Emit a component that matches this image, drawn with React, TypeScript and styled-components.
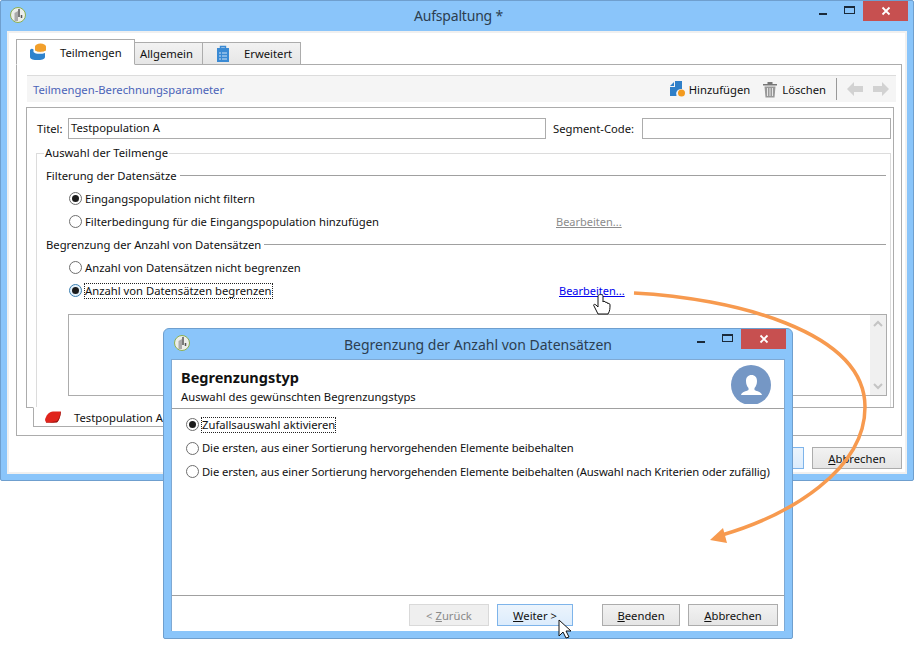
import styled, { createGlobalStyle } from 'styled-components';

const GlobalStyle = createGlobalStyle`
  html, body { margin: 0; padding: 0; background: #fff; }
  body { font-family: "Noto Sans", "Open Sans", sans-serif; font-size: 11.25px; color: #111; }
`;

const Desktop = styled.div`
  position: relative;
  width: 915px;
  height: 653px;
  overflow: hidden;
  background: #fff;
`;

const Window = styled.div<{ $left: number; $top: number; $width: number; $height: number; $side: number; $rounded?: boolean }>`
  position: absolute;
  left: ${(p) => p.$left}px;
  top: ${(p) => p.$top}px;
  width: ${(p) => p.$width}px;
  height: ${(p) => p.$height}px;
  box-sizing: border-box;
  display: flex;
  flex-direction: column;
  background: #8ac5fa;
  border: 1px solid #6f9fce;
  border-radius: ${(p) => (p.$rounded ? '6px 6px 2px 2px' : '2px')};
  padding: 0 ${(p) => p.$side}px ${(p) => p.$side}px;
`;

const TitleBar = styled.div`
  height: 30px;
  flex: none;
  box-sizing: border-box;
  position: relative;
  display: flex;
  align-items: center;
  justify-content: center;
  font-size: 14px;
  color: #2c3e50;
`;

const MainTitleBar = styled(TitleBar)`
  padding: 0 0 2px 3px;
  letter-spacing: -0.2px;
`;

const AppIcon = styled.svg`
  position: absolute;
  left: 2px;
  top: 5px;
`;

const WinControls = styled.div`
  position: absolute;
  right: -1px;
  top: 0;
  display: flex;
  align-items: flex-start;
`;

const WinGlyph = styled.div`
  width: 27px;
  height: 20px;
  display: flex;
  align-items: center;
  justify-content: center;
`;

const CloseBox = styled.div`
  width: 45px;
  height: 20px;
  background: #c75050;
  display: flex;
  align-items: center;
  justify-content: center;
`;

const Client = styled.div`
  flex: 1;
  min-height: 0;
  box-sizing: border-box;
  background: #fff;
  border: 1px solid #7fa9d3;
  border-bottom-width: 0;
  display: flex;
  flex-direction: column;
  position: relative;
`;

const MainClient = styled(Client)`
  padding: 6px 3px 0 7px;
  border: 2px solid #f0f0f0;
`;

const TabStrip = styled.div`
  display: flex;
  align-items: flex-end;
  height: 26px;
  flex: none;
  position: relative;
  z-index: 1;
  margin-bottom: -1px;
`;

const Tab = styled.div<{ $active?: boolean; $width: number; $pad: number }>`
  box-sizing: border-box;
  width: ${(p) => p.$width}px;
  height: ${(p) => (p.$active ? 26 : 23)}px;
  background: ${(p) => (p.$active ? '#fff' : 'linear-gradient(#f2f2f2, #e6e6e6)')};
  border: 1px solid #acacac;
  border-left-width: ${(p) => (p.$active ? 1 : 0)}px;
  border-bottom-color: ${(p) => (p.$active ? '#fff' : '#acacac')};
  display: flex;
  align-items: center;
  gap: 14px;
  padding-left: ${(p) => p.$pad}px;
  white-space: nowrap;
`;

const TabPanel = styled.div`
  height: 372px;
  flex: none;
  box-sizing: border-box;
  border: 1px solid #acacac;
  padding: 10px 5px 0 10px;
  display: flex;
  flex-direction: column;
`;

const Toolbar = styled.div`
  height: 27px;
  flex: none;
  box-sizing: border-box;
  background: #f5f5f5;
  border-top: 1px solid #dcdcdc;
  display: flex;
  align-items: center;
  padding: 0 7px 0 6px;
  margin-bottom: 5px;
`;

const ToolbarTitle = styled.div`
  flex: 1;
  color: #4a63b8;
`;

const ToolButton = styled.div<{ $gap: number; $left: number }>`
  display: flex;
  align-items: center;
  gap: ${(p) => p.$gap}px;
  margin-left: ${(p) => p.$left}px;
`;

const ToolDivider = styled.div`
  width: 1px;
  height: 22px;
  background: #999;
  margin: 0 10px;
`;

const NavArrow = styled.svg<{ $left?: number }>`
  margin-left: ${(p) => p.$left ?? 0}px;
`;

const EditorBox = styled.div`
  position: relative;
  height: 301px;
  width: 868px;
  flex: none;
  box-sizing: border-box;
  margin-left: -1px;
  border: 1px solid #acacac;
  padding: 10px 2px 0 10px;
`;

const FieldRow = styled.div`
  display: flex;
  align-items: center;
  height: 21px;
`;

const FieldLabel = styled.label<{ $width: number; $left?: number }>`
  flex: none;
  width: ${(p) => p.$width}px;
  margin-left: ${(p) => p.$left ?? 0}px;
  white-space: nowrap;
`;

const TextInput = styled.div<{ $width: number }>`
  flex: none;
  box-sizing: border-box;
  width: ${(p) => p.$width}px;
  height: 21px;
  border: 1px solid #acacac;
  background: #fff;
  padding-left: 2px;
  line-height: 18px;
`;

const GroupBox = styled.div`
  position: relative;
  box-sizing: border-box;
  margin: 14px 0 0 -1px;
  height: 254px;
  border: 1px solid #dcdcdc;
  border-bottom: 0;
  padding: 10px 4px 0 9px;
`;

const GroupLegend = styled.div`
  position: absolute;
  left: 7px;
  top: -9px;
  background: #fff;
  padding: 0 1px;
  line-height: 16px;
`;

const SectionHeader = styled.div`
  display: flex;
  align-items: center;
  height: 23px;
  gap: 3px;
  &::after {
    content: '';
    flex: 1;
    height: 1px;
    background: #a0a0a0;
  }
`;

const OptionRow = styled.div`
  display: flex;
  align-items: center;
  height: 23px;
  padding-left: 23px;
  position: relative;
  white-space: nowrap;
`;

const RadioDot = styled.span<{ $on?: boolean; $focus?: boolean }>`
  flex: none;
  box-sizing: border-box;
  width: 13px;
  height: 13px;
  border-radius: 50%;
  border: 1px solid ${(p) => (p.$focus ? '#3c7fb1' : '#6e6e6e')};
  background: ${(p) => (p.$focus ? '#e3f1fb' : '#fff')};
  margin-right: 3px;
  display: flex;
  align-items: center;
  justify-content: center;
  &::after {
    content: '';
    width: 7px;
    height: 7px;
    border-radius: 50%;
    background: ${(p) => (p.$on ? '#1c1c1c' : 'transparent')};
  }
`;

const OptionText = styled.span<{ $focus?: boolean; $tight?: boolean }>`
  outline: ${(p) => (p.$focus ? '1px dotted #222' : 'none')};
  line-height: 14px;
  letter-spacing: ${(p) => (p.$tight ? '-0.1px' : 'normal')};
`;

const EditLink = styled.a<{ $off?: boolean; $left: number }>`
  position: absolute;
  left: ${(p) => p.$left}px;
  color: ${(p) => (p.$off ? '#8c8c8c' : '#0000ee')};
  text-decoration: underline;
  font-size: 11px;
`;

const Preview = styled.div`
  box-sizing: border-box;
  margin: 12px 0 0 22px;
  width: 819px;
  height: 82px;
  border: 1px solid #acacac;
  display: flex;
  justify-content: flex-end;
`;

const ScrollTrack = styled.div`
  width: 16px;
  background: #f0f0f0;
  display: flex;
  flex-direction: column;
  justify-content: space-between;
  align-items: center;
  padding: 5px 0;
`;

const BottomTab = styled.div`
  box-sizing: border-box;
  width: 500px;
  height: 20px;
  flex: none;
  margin: -1px 0 0 6px;
  background: #fff;
  border: 1px solid #acacac;
  border-top-color: #fff;
  position: relative;
  display: flex;
  align-items: center;
  gap: 13px;
  padding-left: 11px;
`;

const FooterRow = styled.div`
  display: flex;
  justify-content: flex-end;
  padding-top: 11px;
`;

const Button = styled.div<{ $width: number; $state?: 'off' | 'hot'; $left?: number }>`
  box-sizing: border-box;
  flex: none;
  width: ${(p) => p.$width}px;
  height: 22px;
  margin-left: ${(p) => p.$left ?? 0}px;
  display: flex;
  align-items: center;
  justify-content: center;
  border: 1px solid ${(p) => (p.$state === 'off' ? '#d9d9d9' : p.$state === 'hot' ? '#7eb4ea' : '#acacac')};
  color: ${(p) => (p.$state === 'off' ? '#8a8a8a' : '#111')};
  background: ${(p) =>
    p.$state === 'off'
      ? '#efefef'
      : p.$state === 'hot'
        ? 'linear-gradient(#ecf4fc, #dcecfc)'
        : 'linear-gradient(#f2f2f2, #e5e5e5)'};
`;

const DialogHeader = styled.div`
  height: 49px;
  flex: none;
  box-sizing: border-box;
  border-bottom: 1px solid #a0a0a0;
  padding: 8px 0 0 9px;
  position: relative;
  overflow: hidden;
`;

const DialogTitle = styled.div`
  font-weight: 700;
  font-size: 14.5px;
  line-height: 19px;
  color: #111;
`;

const DialogSubtitle = styled.div`
  margin-top: 2px;
  line-height: 16px;
`;

const Avatar = styled.svg`
  position: absolute;
  right: 13px;
  top: 5px;
`;

const DialogOptions = styled.div`
  flex: 1;
  padding-top: 4px;
`;

const DialogOption = styled(OptionRow)`
  height: 23.5px;
  padding-left: 14px;
`;

const DialogFooter = styled.div`
  height: 36px;
  flex: none;
  box-sizing: border-box;
  border-top: 1px solid #a0a0a0;
  display: flex;
  align-items: flex-start;
  padding: 8px 6px 0 237px;
`;

const Overlay = styled.svg`
  position: absolute;
  left: 0;
  top: 0;
  pointer-events: none;
`;

const Logo = () => (
  <AppIcon width="18" height="18" viewBox="0 0 18 18">
    <circle cx="9" cy="9" r="7.5" fill="#eceeea" stroke="#8db04f" />
    <path d="M5.5 7 L9 5 V15 H5.5 z" fill="#aaa" />
    <path d="M10 3 V11 M12.5 9 V12" stroke="#555" strokeWidth="1.5" fill="none" />
  </AppIcon>
);

const Controls = () => (
  <WinControls>
    <WinGlyph>
      <svg width="10" height="10" viewBox="0 0 10 10"><rect x="1" y="7" width="8" height="2" fill="#1a2a3a" /></svg>
    </WinGlyph>
    <WinGlyph>
      <svg width="11" height="10" viewBox="0 0 11 10"><rect x=".5" y=".5" width="10" height="7" fill="none" stroke="#1a2a3a" /><rect x="0" y="0" width="11" height="2" fill="#1a2a3a" /></svg>
    </WinGlyph>
    <CloseBox>
      <svg width="10" height="10" viewBox="0 0 10 10"><path d="M1.5 1.5 L8.5 8.5 M8.5 1.5 L1.5 8.5" stroke="#fff" strokeWidth="1.8" /></svg>
    </CloseBox>
  </WinControls>
);

export default function App() {
  return (
    <Desktop>
      <GlobalStyle />
      <Window $left={0} $top={0} $width={914} $height={481} $side={6}>
        <MainTitleBar>
          <Logo />
          Aufspaltung *
          <Controls />
        </MainTitleBar>
        <MainClient>
          <TabStrip>
            <Tab $active $width={119} $pad={13}>
              <svg width="16" height="18" viewBox="0 0 16 18">
                <ellipse cx="10.5" cy="3.5" rx="5.5" ry="3" fill="#f2a02c" />
                <rect x="5" y="3.5" width="11" height="3.5" fill="#f2a02c" />
                <ellipse cx="10.5" cy="7" rx="5.5" ry="2.6" fill="#f2a02c" />
                <path d="M5 8.2 C7 9.8 13 9.8 16 8.2" stroke="#fff" fill="none" />
                <path d="M0 7 C1 5.5 2.5 5.5 3.5 6.5 V9 C5 11 11 11.5 15 10 V14 C15 16.5 11 17 7.5 17 C4 17 0 16.5 0 14 z" fill="#2f83cd" />
              </svg>
              Teilmengen
            </Tab>
            <Tab $width={68} $pad={5}>Allgemein</Tab>
            <Tab $width={98} $pad={13}>
              <svg width="14" height="17" viewBox="0 0 14 17">
                <rect x="1" y="3" width="12" height="14" fill="#3a8ad4" />
                <path d="M4.5 3.5 V1.5 H9.5 V3.5 z" fill="none" stroke="#3a8ad4" strokeWidth="1.4" />
                <path d="M3 8h2M6 8h5M3 11h2M6 11h5M3 14h2M6 14h5" stroke="#cfe3f6" />
              </svg>
              Erweitert
            </Tab>
          </TabStrip>
          <TabPanel>
            <Toolbar>
              <ToolbarTitle>Teilmengen-Berechnungsparameter</ToolbarTitle>
              <ToolButton $gap={3} $left={12}>
                <svg width="16" height="17" viewBox="0 0 16 17">
                  <path d="M0 5 L4 1 V5 z M5 0 H12 V8 A5 5 0 0 0 6.5 15 H0 V6 H5 z" fill="#2f7fc8" />
                  <circle cx="11.5" cy="12" r="3.5" fill="#f39a1e" />
                </svg>
                Hinzufügen
              </ToolButton>
              <ToolButton $gap={5} $left={13}>
                <svg width="14" height="17" viewBox="0 0 14 17">
                  <path d="M0 3 H14 V4.5 H0 z M4.5 1 H9.5 V3 H4.5 z" fill="#777" />
                  <path d="M1.5 5.5 H12.5 L11.5 16.5 H2.5 z" fill="#999" />
                  <path d="M4.5 7 V15 M7 7 V15 M9.5 7 V15" stroke="#e6e6e6" />
                </svg>
                Löschen
              </ToolButton>
              <ToolDivider />
              <NavArrow width="16" height="14" viewBox="0 0 16 14"><path d="M0 7 L7 0 V4 H16 V10 H7 V14 z" fill="#d2d2d2" /></NavArrow>
              <NavArrow $left={10} width="16" height="14" viewBox="0 0 16 14"><path d="M16 7 L9 0 V4 H0 V10 H9 V14 z" fill="#d2d2d2" /></NavArrow>
            </Toolbar>
            <EditorBox>
              <FieldRow>
                <FieldLabel $width={31}>Titel:</FieldLabel>
                <TextInput $width={478}>Testpopulation A</TextInput>
                <FieldLabel $width={89} $left={7}>Segment-Code:</FieldLabel>
                <TextInput $width={249} />
              </FieldRow>
              <GroupBox>
                <GroupLegend>Auswahl der Teilmenge</GroupLegend>
                <SectionHeader>Filterung der Datensätze</SectionHeader>
                <OptionRow>
                  <RadioDot $on />
                  <OptionText>Eingangspopulation nicht filtern</OptionText>
                </OptionRow>
                <OptionRow>
                  <RadioDot />
                  <OptionText>Filterbedingung für die Eingangspopulation hinzufügen</OptionText>
                  <EditLink $off $left={510}>Bearbeiten...</EditLink>
                </OptionRow>
                <SectionHeader>Begrenzung der Anzahl von Datensätzen</SectionHeader>
                <OptionRow>
                  <RadioDot />
                  <OptionText>Anzahl von Datensätzen nicht begrenzen</OptionText>
                </OptionRow>
                <OptionRow>
                  <RadioDot $on $focus />
                  <OptionText $focus>Anzahl von Datensätzen begrenzen</OptionText>
                  <EditLink $left={513}>Bearbeiten...</EditLink>
                </OptionRow>
                <Preview>
                  <ScrollTrack>
                    <svg width="10" height="8" viewBox="0 0 10 8"><path d="M1 6 L5 2 L9 6" fill="none" stroke="#c4c4c4" strokeWidth="2" /></svg>
                    <svg width="10" height="8" viewBox="0 0 10 8"><path d="M1 2 L5 6 L9 2" fill="none" stroke="#c4c4c4" strokeWidth="2" /></svg>
                  </ScrollTrack>
                </Preview>
              </GroupBox>
            </EditorBox>
            <BottomTab>
              <svg width="16" height="12" viewBox="0 0 16 12">
                <path d="M0 9 C1 4 4 1 8 .5 H16 C15.5 5 14 10 12 11 C8 12 3 12 1 11.5 z" fill="#e0241c" />
                <path d="M1 11 C5 11.5 9 11 12 10 C14 8 15 5 15.5 1 L16 1 C15.5 5 14 10 12 11.5 H1 z" fill="#8e1410" />
              </svg>
              Testpopulation A
            </BottomTab>
          </TabPanel>
          <FooterRow>
            <Button $width={80} $state="hot" />
            <Button $width={90} $left={8}>
              <span><u>A</u>bbrechen</span>
            </Button>
          </FooterRow>
        </MainClient>
      </Window>

      <Window $left={163} $top={328} $width={630} $height={311} $side={7} $rounded>
        <TitleBar>
          <Logo />
          Begrenzung der Anzahl von Datensätzen
          <Controls />
        </TitleBar>
        <Client>
          <DialogHeader>
            <DialogTitle>Begrenzungstyp</DialogTitle>
            <DialogSubtitle>Auswahl des gewünschten Begrenzungstyps</DialogSubtitle>
            <Avatar width="40" height="39" viewBox="0 0 40 39">
              <circle cx="20" cy="20" r="20" fill="#7597c5" />
              <path d="M20.5 10 C24 10 26 12.5 26 16 C26 19 25 21.5 23.5 23 V25 C26 26.5 30 26.5 31 30 H10 C11 26.5 15 26.5 17.5 25 V23 C16 21.5 15 19 15 16 C15 12.5 17 10 20.5 10 z" fill="#fff" />
            </Avatar>
          </DialogHeader>
          <DialogOptions>
            <DialogOption>
              <RadioDot $on />
              <OptionText $focus>Zufallsauswahl aktivieren</OptionText>
            </DialogOption>
            <DialogOption>
              <RadioDot />
              <OptionText $tight>Die ersten, aus einer Sortierung hervorgehenden Elemente beibehalten</OptionText>
            </DialogOption>
            <DialogOption>
              <RadioDot />
              <OptionText $tight>Die ersten, aus einer Sortierung hervorgehenden Elemente beibehalten (Auswahl nach Kriterien oder zufällig)</OptionText>
            </DialogOption>
          </DialogOptions>
          <DialogFooter>
            <Button $width={80} $state="off"><span>&lt; <u>Z</u>urück</span></Button>
            <Button $width={76} $state="hot" $left={8}><span><u>W</u>eiter &gt;</span></Button>
            <Button $width={78} $left={29}><span><u>B</u>eenden</span></Button>
            <Button $width={90} $left={8}><span><u>A</u>bbrechen</span></Button>
          </DialogFooter>
        </Client>
      </Window>

      <Overlay width="915" height="653" viewBox="0 0 915 653">
        <path d="M634 293 C730 298 865 330 865 407 C865 470 790 515 722 535" fill="none" stroke="#f79a4f" strokeWidth="3.5" />
        <path d="M710 540 L723 528 L727 543 z" fill="#f79a4f" />
        <path d="M598 296 V307 L596 305 C594 303.5 593 305 594 306 L598 314 H608 C610 311 610 308 610 305 C610 303 608 303 608 304 C608 302 606 302 606 303 C606 301 603 301 603 302 V296 C603 294 598 294 598 296 z" fill="#fff" stroke="#111" />
        <path d="M559 620 V636 L563 632 L566 638 L569 637 L566 631 H571 z" fill="#fff" stroke="#111" />
      </Overlay>
    </Desktop>
  );
}
